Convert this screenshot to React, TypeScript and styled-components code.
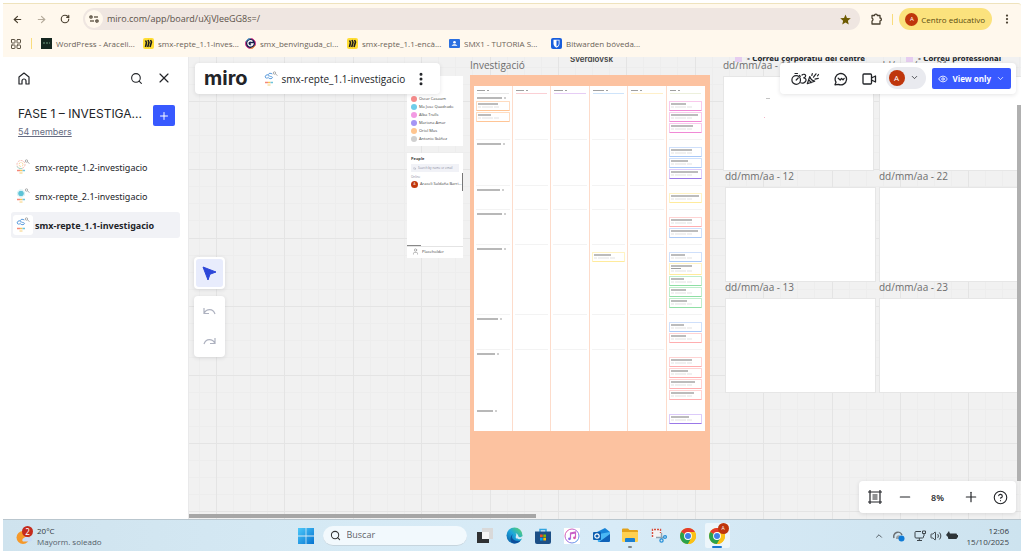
import React from "react";
import styled, { createGlobalStyle } from "styled-components";
import {
  ArrowLeft, ArrowRight, RotateCw, LayoutGrid, EllipsisVertical, Search, X, Plus, Minus,
  ChevronDown, ChevronUp, Eye, CircleHelp, Volume2, User,
} from "lucide-react";

const ui = '"Open Sans", "Noto Sans", sans-serif';
const listFont = '"Noto Sans", "Open Sans", sans-serif';
const brand = 'Inter, "Noto Sans", sans-serif';

const Global = createGlobalStyle`
  *, *::before, *::after { box-sizing: border-box; }
  body { margin: 0; background: #fff; font-family: ${ui}; color: #222428; }
  button { font: inherit; color: inherit; border: 0; padding: 0; background: none; display: flex; align-items: center; justify-content: center; }
  a { color: inherit; text-decoration: none; }
  svg { display: block; flex: none; }
  h1, p, ul { margin: 0; padding: 0; }
  ul { list-style: none; }
`;

const Page = styled.div`
  min-height: 100vh;
  padding: 3px 3px 2px;
  display: flex;
  flex-direction: column;
`;

/* Browser chrome */
const Browser = styled.header`
  background: #fff8ed;
  border-top: 1px solid #efe3bd;
  border-radius: 0 3px 0 0;
`;
const NavRow = styled.div`
  height: 30px;
  display: flex;
  align-items: center;
  padding: 0 2px;
  color: #4a4030;
`;
const NavButton = styled.button<{ $muted?: boolean }>`
  width: 24px;
  height: 22px;
  flex: none;
  color: ${(p) => (p.$muted ? "#b5ab9b" : "#4a4030")};
`;
const Omnibox = styled.div`
  flex: 1;
  height: 22px;
  margin: 0 4px 0 6px;
  padding: 0 9px 0 2px;
  border-radius: 11px;
  background: #efe6e1;
  display: flex;
  align-items: center;
  gap: 4px;
  min-width: 0;
`;
const SiteBadge = styled.button`
  width: 18px;
  height: 18px;
  border-radius: 9px;
  background: #fff8ed;
  flex: none;
`;
const Address = styled.input`
  flex: 1;
  min-width: 0;
  border: 0;
  padding: 0;
  background: none;
  font: 9px/16px ${ui};
  color: #5b5249;
  outline: 0;
`;
const Divider = styled.span`
  width: 1px;
  height: 11px;
  margin: 0 6px 0 4px;
  background: #f9dc7c;
  flex: none;
`;
const Profile = styled.button`
  height: 22px;
  margin-right: 3px;
  padding: 0 7px 0 6px;
  gap: 3px;
  border-radius: 11px;
  background: #fbe27d;
  font-size: 8px;
  color: #5a4a10;
  white-space: nowrap;
`;
const Avatar = styled.span<{ $size: number }>`
  width: ${(p) => p.$size}px;
  height: ${(p) => p.$size}px;
  border-radius: 50%;
  background: #bf360c;
  color: #fff;
  font-size: ${(p) => Math.floor(p.$size / 2)}px;
  line-height: 1;
  display: flex;
  align-items: center;
  justify-content: center;
  flex: none;
`;
const BookmarkRow = styled.nav`
  height: 23px;
  padding: 0 0 4px 7px;
  display: flex;
  align-items: center;
`;
const BookmarkDivider = styled(Divider)`
  margin: 0 9px;
`;
const Bookmark = styled.a`
  width: 102px;
  display: flex;
  align-items: center;
  gap: 4px;
  font: 8px/12px ${ui};
  color: #6b6358;
  white-space: nowrap;
`;

/* Workspace */
const Workspace = styled.main`
  flex: 1;
  display: flex;
  min-height: 0;
`;
const Sidebar = styled.aside`
  width: 185px;
  flex: none;
  padding: 10px 8px 0;
`;
const SideTop = styled.div`
  display: flex;
  align-items: center;
  padding: 0 9px 0 5px;
  gap: 12px;
  height: 22px;
`;
const IconButton = styled.button`
  width: 15px;
  height: 20px;
  flex: none;
`;
const Spacer = styled.span`
  flex: 1;
`;
const SpaceHead = styled.div`
  display: flex;
  justify-content: space-between;
  padding: 15px 5px 0 7px;
`;
const SpaceTitle = styled.h1`
  font: 400 12px/20px ${brand};
  white-space: nowrap;
`;
const Members = styled.a`
  display: block;
  font: 9px/16px ${brand};
  color: #656b81;
  text-decoration: underline;
`;
const AddButton = styled.button`
  width: 22px;
  height: 21px;
  margin-top: 1px;
  border-radius: 2px;
  background: #3859ff;
  color: #fff;
`;
const BoardList = styled.ul`
  display: flex;
  flex-direction: column;
  gap: 3px;
  padding-top: 14px;
`;
const BoardLink = styled.a<{ $active?: boolean }>`
  height: 26px;
  padding-left: 2px;
  border-radius: 3px;
  display: flex;
  align-items: center;
  gap: 2px;
  font-family: ${listFont};
  font-size: 9px;
  font-weight: ${(p) => (p.$active ? 700 : 400)};
  background: ${(p) => (p.$active ? "#f1f2f6" : "transparent")};
  white-space: nowrap;
`;
const Thumb = styled.span`
  width: 20px;
  height: 20px;
  border-radius: 3px;
  background: #fff;
  display: flex;
  align-items: center;
  justify-content: center;
`;

/* Free canvas */
const Canvas = styled.section`
  position: relative;
  flex: 1;
  min-width: 0;
  overflow: hidden;
  background: #f1f1f1;
  border-left: 1px solid #e9e9ea;
`;
const GridLines = styled.svg`
  position: absolute;
  inset: 0;
  width: 100%;
  height: 100%;
`;
const Placed = styled.div<{ $x: number; $y: number }>`
  position: absolute;
  left: ${(p) => p.$x}px;
  top: ${(p) => p.$y}px;
`;
const FrameTitle = styled.div`
  font: 10px/16px ${ui};
  color: #6d6d6d;
  white-space: nowrap;
`;
const Sheet = styled.div`
  width: 151px;
  height: 95px;
  background: #fff;
  border: 1px solid #e6e6e6;
`;
const Heading = styled.div`
  display: flex;
  gap: 5px;
  font: 700 7px/8px "DejaVu Sans", sans-serif;
  white-space: nowrap;
`;
const Tag = styled.span`
  width: 7px;
  height: 7px;
  background: #e6cdf0;
`;
const PlaceName = styled.div`
  font: 600 8px/10px ${brand};
  color: #444;
`;

/* Research frame with the kanban */
const Frame = styled.div`
  width: 240px;
  padding: 11px 5px 59px 4px;
  background: #fcc2a0;
`;
const Kanban = styled.div`
  background: #fff;
`;
const Lane = styled.div`
  display: grid;
  grid-template-columns: repeat(6, 1fr);
`;
const HeadCell = styled.div<{ $line: string }>`
  height: 8px;
  padding: 4px 3px 0;
  border-right: 1px solid #fddccb;
  display: flex;
  flex-wrap: wrap;
  gap: 2px;
  &::after { content: ""; width: 100%; height: 1px; background: ${(p) => p.$line}; }
  &:last-child { border-right-color: #fff; }
`;
const Cell = styled.div`
  border-right: 1px solid #fddccb;
  padding: 0 2px;
  &:last-child { border-right-color: #fff; }
`;
const CellBody = styled.div<{ $last?: boolean }>`
  height: 100%;
  padding-bottom: 6px;
  border-bottom: 1px solid ${(p) => (p.$last ? "#fff" : "#f3f3f3")};
  display: flex;
  flex-direction: column;
  gap: 1px;
`;
const LaneLabel = styled.div`
  height: 6px;
  padding: 3px 0 0 1px;
  display: flex;
  gap: 2px;
`;
const Bar = styled.span<{ $w: number; $tone?: string; $h?: number }>`
  width: ${(p) => p.$w}px;
  height: ${(p) => p.$h ?? 1}px;
  background: ${(p) => p.$tone ?? "#a0a0a0"};
`;
const Card = styled.div<{ $tone: string; $edge: string; $tall?: boolean }>`
  height: ${(p) => (p.$tall ? 12 : 10)}px;
  padding: 1px;
  border: 1px solid ${(p) => p.$tone};
  border-bottom-color: ${(p) => p.$edge};
  border-radius: 1px;
  display: flex;
  flex-direction: column;
  gap: 1px;
`;
const Chips = styled.div`
  display: flex;
  gap: 1px;
`;

/* People lists */
const PeopleCard = styled.div<{ $h: number; $end?: boolean }>`
  width: 56px;
  height: ${(p) => p.$h}px;
  background: #fff;
  padding: 3px 4px;
  font-size: 4px;
  line-height: 6px;
  color: #444;
  display: flex;
  flex-direction: column;
  justify-content: ${(p) => (p.$end ? "flex-end" : "flex-start")};
`;
const Person = styled.div`
  height: 8px;
  display: flex;
  align-items: center;
  gap: 2px;
  white-space: nowrap;
`;
const Dot = styled.span<{ $c: string }>`
  width: 6px;
  height: 6px;
  border-radius: 50%;
  background: ${(p) => p.$c};
`;
const MiniSearch = styled.label`
  height: 8px;
  margin: 2px 0;
  padding-left: 2px;
  background: #f1f2f7;
  display: flex;
  align-items: center;
  gap: 2px;
  color: #8a8ea0;
  input { width: 42px; border: 0; padding: 0; background: none; font: 3px/6px ${ui}; outline: 0; }
  input::placeholder { color: #8a8ea0; }
`;
const MiniLabel = styled.span`
  font-size: 3px;
  color: #8a8ea0;
`;
const MiniScroll = styled.span`
  position: absolute;
  right: 0;
  top: 20px;
  width: 1px;
  height: 18px;
  background: #777;
`;
const MiniFoot = styled.div`
  margin: 0 -4px;
  padding: 1px 0 0 5px;
  border-top: 1px solid #e4e4e4;
  display: flex;
  align-items: center;
  gap: 3px;
`;
const MiniTrack = styled(Bar)`
  margin: auto 0 0 -4px;
`;

/* Floating toolbars */
const Panel = styled.div`
  position: absolute;
  background: #fff;
  border-radius: 4px;
  box-shadow: 0 1px 4px rgba(34, 36, 40, 0.12);
  display: flex;
  align-items: center;
`;
const TitlePanel = styled(Panel)`
  left: 6px;
  top: 6px;
  height: 31px;
  padding: 0 12px 0 9px;
`;
const Logo = styled.a`
  font: 700 20px/24px ${brand};
  margin-right: 16px;
  padding-bottom: 2px;
`;
const BoardName = styled.span`
  font-size: 10px;
  line-height: 16px;
  margin: 0 8px 0 4px;
  white-space: nowrap;
`;
const ActionPanel = styled(Panel)`
  right: 5px;
  top: 6px;
  height: 31px;
  padding: 0 5px 0 11px;
`;
const Actions = styled.div`
  display: flex;
  align-items: center;
  gap: 14px;
`;
const Account = styled.button`
  height: 22px;
  margin: 0 6px 2px 9px;
  padding: 0 7px 0 3px;
  gap: 5px;
  border-radius: 11px;
  background: #e9eaef;
`;
const ViewOnly = styled.button`
  height: 21px;
  padding: 0 6px;
  gap: 5px;
  border-radius: 2px;
  background: #3859ff;
  color: #fff;
  font-size: 8px;
  font-weight: 700;
  white-space: nowrap;
`;
const SelectPanel = styled(Panel)`
  left: 5px;
  top: 200px;
  width: 31px;
  height: 32px;
  padding: 2px;
`;
const SelectTool = styled.button`
  width: 27px;
  height: 28px;
  border-radius: 3px;
  background: #e8ecfc;
`;
const HistoryPanel = styled(Panel)`
  left: 5px;
  top: 239px;
  width: 31px;
  height: 61px;
  flex-direction: column;
  justify-content: space-around;
`;
const ZoomPanel = styled(Panel)`
  right: 5px;
  bottom: 6px;
  height: 32px;
  padding: 0 8px;
  gap: 15px;
  font-size: 9px;
  font-weight: 600;
`;
const ZoomLevel = styled.span`
  width: 21px;
  text-align: center;
`;
const ScrollX = styled.div`
  position: absolute;
  left: 0;
  bottom: 1px;
  width: 347px;
  height: 4px;
  background: #a6a6a6;
`;
const ScrollY = styled.div`
  position: absolute;
  right: 0;
  top: 48px;
  bottom: 38px;
  width: 4px;
  background: #b0b0b0;
`;

/* Windows taskbar */
const Taskbar = styled.footer`
  height: 32px;
  border-top: 1px solid #b9c6ce;
  background: linear-gradient(90deg, #cfe3ee, #d6eaf5 35%, #d8ebf7 60%, #cde3ef);
  display: grid;
  grid-template-columns: 1fr auto 1fr;
  align-items: center;
  font-size: 8px;
  line-height: 11px;
  color: #55616a;
`;
const Weather = styled.button`
  justify-self: start;
  margin-left: 13px;
  gap: 4px;
  text-align: left;
`;
const Stack = styled.span`
  display: flex;
  flex-direction: column;
`;
const Strong = styled.span`
  color: #33393d;
`;
const Apps = styled.div`
  display: flex;
  align-items: center;
  padding-left: 5px;
`;
const SearchBox = styled.label`
  width: 144px;
  height: 20px;
  margin: 0 4px 0 9px;
  padding-left: 7px;
  border-radius: 10px;
  background: #f2f9fd;
  border-bottom: 1px solid #c6d5de;
  display: flex;
  align-items: center;
  gap: 6px;
  color: #333;
  input { width: 100px; border: 0; padding: 0; background: none; font: 9px/14px ${ui}; outline: 0; }
  input::placeholder { color: #5f6468; opacity: 1; }
`;
const AppButton = styled.button<{ $active?: boolean; $open?: boolean }>`
  position: relative;
  width: 25px;
  height: 25px;
  margin: 0 2px;
  border-radius: 2px;
  background: ${(p) => (p.$active ? "#edf6fb" : "none")};
  &::after {
    content: "";
    position: absolute;
    bottom: 0;
    width: ${(p) => (p.$active ? 10 : p.$open ? 4 : 0)}px;
    height: 2px;
    border-radius: 1px;
    background: ${(p) => (p.$active ? "#1976d2" : "#7b868d")};
  }
`;
const Notice = styled.span`
  position: absolute;
  right: 1px;
  top: 0;
`;
const Tray = styled.div`
  justify-self: end;
  display: flex;
  align-items: center;
  gap: 9px;
  padding-right: 12px;
  color: #3d454b;
`;
const TrayGroup = styled.div`
  display: flex;
  align-items: center;
  gap: 4px;
`;
const Clock = styled(Stack)`
  text-align: right;
`;

const Thumbnail = ({ kind }: { kind: "spiral" | "gear" | "loop" }) => (
  <svg width="14" height="16" viewBox="0 0 14 16" fill="none">
    {kind === "spiral" && (
      <>
        <circle cx="5" cy="5.500" r="4" stroke="#f5b8b0" strokeDasharray="2 1" />
        <circle cx="5" cy="5.500" r="2" stroke="#f9d79a" strokeDasharray="2 1" />
        <path d="M1 7.500a4 4 0 0 0 5 2" stroke="#9bdccf" />
      </>
    )}
    {kind === "gear" && (
      <>
        <circle cx="5" cy="5.500" r="2.800" fill="#5cc3d6" />
        <circle cx="5" cy="5.500" r="3.600" stroke="#a8e0e9" strokeDasharray="1 1" />
      </>
    )}
    {kind === "loop" && (
      <path d="M8 2.800C6 1.500 3.800 2.600 4.500 4.200 5.200 5.800 7.800 5.200 8.400 6.200 8.800 7.500 6.500 8.200 5 7.400M4 3.800C2.500 3.500 1 4.500 1.200 6 1.500 7.500 3.500 7.500 4.500 6.300" stroke="#5a9bdc" strokeLinecap="round" />
    )}
    <path d="M1 11.500h3" stroke="#f58878" strokeWidth="1.500" />
    <path d="M4 11.500h2.500" stroke="#f8c458" strokeWidth="1.500" />
    <path d="M6.500 11.500H9" stroke="#6cc4de" strokeWidth="1.500" />
    <path d="M3.500 14h3" stroke="#f6cf7a" />
    <circle cx="10.500" cy="2" r="1.200" stroke="#999" strokeWidth=".8" />
    <path d="m11.500 3 2 1.500" stroke="#999" strokeWidth=".8" />
  </svg>
);

const HomeIcon = () => (
  <svg width="12" height="13" viewBox="0 0 12 13" fill="none" stroke="#222428" strokeWidth="1.200">
    <path d="M1 12V5L6 1l5 4v7H8V9a2 2 0 0 0-4 0v3Z" strokeLinejoin="round" />
  </svg>
);

const TuneIcon = () => (
  <svg width="10" height="8" viewBox="0 0 10 8" fill="none" stroke="#4a4030" strokeWidth="1.200">
    <circle cx="2" cy="2" r="1.200" /><path d="M5 2h4" />
    <circle cx="8" cy="6" r="1.200" /><path d="M1 6h4" />
  </svg>
);

const StarIcon = () => (
  <svg width="11" height="11" viewBox="0 0 24 24" fill="#6d5a00">
    <path d="m12 1 3.200 7.600 8.300.7-6.300 5.400 1.900 8.100L12 18.500l-7.100 4.300 1.900-8.100L.5 9.300l8.300-.7z" />
  </svg>
);

const ExtensionIcon = () => (
  <svg width="13" height="12" viewBox="0 0 13 12" fill="none" stroke="#4a4030" strokeWidth="1.300" strokeLinejoin="round">
    <path d="M2 2.500h2.500a1.400 1.400 0 0 1 2.800 0H10V5a1.400 1.400 0 0 1 0 2.800V11H2V8a1.500 1.500 0 0 0 0-2.800Z" />
  </svg>
);

const MiroFav = () => (
  <svg width="11" height="11" viewBox="0 0 11 11">
    <rect width="11" height="11" rx="2" fill="#ffdd33" />
    <path d="m2.500 2.500 1 2-1 4.500M5 2l1 2.500L4.700 9M7.500 2l1 2L7 9" stroke="#1c1c1e" strokeWidth="1.600" fill="none" />
  </svg>
);
const WordFav = () => (
  <svg width="11" height="11" viewBox="0 0 11 11">
    <rect width="11" height="11" fill="#14261f" />
    <path d="M2 5h7" stroke="#6f9c80" strokeDasharray="2 1" />
  </svg>
);
const GFav = () => (
  <svg width="11" height="11" viewBox="0 0 11 11" fill="none">
    <circle cx="5.500" cy="5.500" r="5" fill="#17224d" stroke="#e0358a" />
    <path d="M1 3.500A5 5 0 0 1 5.500.5" stroke="#31c1e0" />
    <path d="M10 7.500a5 5 0 0 1-4.500 3" stroke="#f2b430" />
    <path d="M7.500 3.700A2.600 2.600 0 1 0 8 6H5.700" stroke="#fff" strokeWidth="1.300" />
  </svg>
);
const ClassFav = () => (
  <svg width="11" height="9" viewBox="0 0 11 9">
    <rect width="11" height="9" rx="1" fill="#2a6fe0" />
    <circle cx="5.500" cy="3.200" r="1.300" fill="#fff" />
    <path d="M2.700 6.800c.5-2 5-2 5.600 0Z" fill="#fff" />
  </svg>
);
const ShieldFav = () => (
  <svg width="11" height="11" viewBox="0 0 11 11">
    <rect width="11" height="11" rx="2" fill="#175ddc" />
    <path d="M2.500 1.700h6v4c0 2-1.500 3-3 4-1.500-1-3-2-3-4Z" fill="#fff" />
    <path d="M5.500 2.600h2.200v3.100c0 1.300-1 2.100-2.200 2.900Z" fill="#175ddc" />
  </svg>
);

const ReactionsIcon = () => (
  <svg width="29" height="14" viewBox="0 0 29 14" fill="none" stroke="#222428" strokeWidth="1.200" strokeLinecap="round" strokeLinejoin="round">
    <circle cx="5.200" cy="8" r="4.300" /><path d="M4 1.500h2.500M5.200 8l2-2M8.500 3.500l.8.800" />
    <path d="M11 3c1.300-1.300 3.800-.8 3.700.8-.1 1.200-1 1.800-2 2 1.700.2 2.800 1.500 2.200 3-.7 2-3.200 2.900-5.200 2" />
    <path d="m18.800 4.500-2.500 7.200 7.400-2.500M18.800 4.500c.8 2.500 2.400 4.300 4.900 4.700M17.800 7.800l2.400 2.700" />
    <path d="m20.800 3.500.5-1.800M22.500 5.200l2.500-3.400M24 7.200l3.300-.8M26.500 3.800l1-1.300" />
  </svg>
);
const CommentIcon = () => (
  <svg width="14" height="14" viewBox="0 0 14 14" fill="none" stroke="#222428" strokeWidth="1.300" strokeLinejoin="round" strokeLinecap="round">
    <path d="M2 10.200A5.700 5.700 0 1 1 4.500 12.400L1 12.800Z" />
    <path d="m4.200 6.200 2 1.800 1.300-1.500L9 7.800l1.200-1.400" />
  </svg>
);
const CameraIcon = () => (
  <svg width="15" height="12" viewBox="0 0 15 12" fill="none" stroke="#222428" strokeWidth="1.300" strokeLinejoin="round">
    <rect x="1" y="1" width="8.500" height="10" rx="1" /><path d="M9.500 4.500h1l3-1.500v6l-3-1.500h-1" />
  </svg>
);
const CursorIcon = () => (
  <svg width="15" height="15" viewBox="0 0 15 15"><path d="m1 1 13 5-6 2.200L6 14Z" fill="#2d47d8" stroke="#2d47d8" strokeLinejoin="round" /></svg>
);
const UndoIcon = ({ flip }: { flip?: boolean }) => (
  <svg width="13" height="9" viewBox="0 0 13 9" fill="none" stroke="#aeb2c0" strokeWidth="1.200">
    {flip ? <path d="M12 1v5.500H7M12 6.300C9.500 1.500 3 1 1 7" /> : <path d="M1 1v5.500h5M1 6.300C3.500 1.500 10 1 12 7" />}
  </svg>
);
const FramesIcon = () => (
  <svg width="14" height="14" viewBox="0 0 14 14" fill="none" stroke="#222428" strokeWidth="1.200">
    <path d="M2 0v14M12 0v14M0 2h14M0 12h14M4.500 5h5M4.500 7h5M4.500 9h5" />
  </svg>
);

const WeatherIcon = () => (
  <svg width="17" height="19" viewBox="0 0 17 19">
    <circle cx="7" cy="11.500" r="6.500" fill="#f5992a" />
    <path d="M7 15.500a2 2 0 0 1 1-3.500 3 3 0 0 1 5-.5 2 2 0 0 1 1.500 4Z" fill="#c9dcf8" />
    <circle cx="11.500" cy="5.500" r="5.500" fill="#c42b1c" />
    <text x="11.500" y="8.500" fontSize="8" fill="#fff" textAnchor="middle" fontFamily="Noto Sans">2</text>
  </svg>
);
const WindowsIcon = () => (
  <svg width="16" height="16" viewBox="0 0 16 16">
    <defs><linearGradient id="win" x1="0" y1="0" x2="1" y2="1"><stop stopColor="#4cc8fa" /><stop offset="1" stopColor="#0673d0" /></linearGradient></defs>
    <path d="M0 0h7.600v7.600H0zM8.400 0H16v7.600H8.400zM0 8.400h7.600V16H0zM8.400 8.400H16V16H8.400z" fill="url(#win)" />
  </svg>
);
const DesksIcon = () => (
  <svg width="16" height="16" viewBox="0 0 16 16">
    <path d="M0 4h12v11H0z" fill="#2f3133" /><path d="M5 0h11v11H5z" fill="#d9d9d9" /><path d="M5 4h7v7H5z" fill="#f4f4f4" />
  </svg>
);
const EdgeIcon = () => (
  <svg width="17" height="17" viewBox="0 0 17 17">
    <defs><linearGradient id="edge" x1="0" y1="1" x2="1" y2="0"><stop stopColor="#0c59a4" /><stop offset=".5" stopColor="#1ba6dd" /><stop offset="1" stopColor="#66d95a" /></linearGradient></defs>
    <circle cx="8.500" cy="8.500" r="8" fill="url(#edge)" />
    <path d="M7 7c-3 4 1 8 7.500 6.500-1.500 2.300-4 3-6 3C4 16.500 3 10 7 7Z" fill="#0c4f9c" />
    <path d="M9.500 6.500c2 1-.5 3 .5 4.500s4.500 1.500 6 .5l1-1V9c-1 1.500-4 1.500-4.500.5s-.5-3-3-3Z" fill="#d6eaf5" />
  </svg>
);
const StoreIcon = () => (
  <svg width="16" height="16" viewBox="0 0 16 16">
    <path d="M5 4V1.500h6V4" stroke="#2fa4e0" strokeWidth="1.500" fill="none" />
    <path d="M0 3.500h16V14a2 2 0 0 1-2 2H2a2 2 0 0 1-2-2Z" fill="#1c4f86" />
    <path d="M5 6.500h2.700v2.700H5z" fill="#f25022" /><path d="M8.300 6.500H11v2.700H8.300z" fill="#7fba00" />
    <path d="M5 9.800h2.700v2.700H5z" fill="#00a4ef" /><path d="M8.300 9.800H11v2.700H8.300z" fill="#ffb900" />
  </svg>
);
const MusicIcon = () => (
  <svg width="16" height="16" viewBox="0 0 16 16" fill="none">
    <defs><linearGradient id="music" x1="0" y1="0" x2="1" y2="1"><stop stopColor="#f2549b" /><stop offset=".5" stopColor="#a66be0" /><stop offset="1" stopColor="#39a9ef" /></linearGradient></defs>
    <path d="M0 0h16v16H0z" fill="#fff" />
    <circle cx="8" cy="8" r="7" stroke="url(#music)" />
    <path d="M6.500 10.500V5l5-1v5.500M6.500 6l5-1" stroke="#c95fc8" strokeWidth="1.200" />
    <circle cx="5.500" cy="10.800" r="1.400" fill="#8a6be8" /><circle cx="10.500" cy="9.800" r="1.400" fill="#d757b0" />
  </svg>
);
const OutlookIcon = () => (
  <svg width="17" height="15" viewBox="0 0 17 15">
    <path d="m4 4 8-4 5 4v8a2 2 0 0 1-2 2H5Z" fill="#1683d8" /><path d="m6 6 11-2v8a2 2 0 0 1-2 2H5Z" fill="#4ab8f5" /><path d="m6 14 11-8v7l-1 1Z" fill="#0f62b8" />
    <rect y="4" width="8" height="8" rx="1" fill="#0d5fb0" /><circle cx="4" cy="8" r="2.200" stroke="#fff" strokeWidth="1.200" fill="none" />
  </svg>
);
const FolderIcon = () => (
  <svg width="16" height="15" viewBox="0 0 16 15">
    <path d="M0 1.500A1 1 0 0 1 1 .5h5L7.500 2H15a1 1 0 0 1 1 1v3H0Z" fill="#e3a21a" />
    <path d="M0 4h16v9a1 1 0 0 1-1 1H1a1 1 0 0 1-1-1Z" fill="#ffd04f" />
    <path d="M3 11a1 1 0 0 1 1-1h8a1 1 0 0 1 1 1v3H3Z" fill="#1b7fd0" />
  </svg>
);
const SnipIcon = () => (
  <svg width="16" height="15" viewBox="0 0 16 15" fill="none">
    <path d="M1 1h9v9H1z" fill="#f3f3f3" />
    <path d="M1.500 9V1.500H9.500V5" stroke="#d65040" strokeWidth="1.400" strokeDasharray="2 1" />
    <path d="M10.500 5v6M5 9.500h8" stroke="#8fa3b0" strokeWidth="1.400" />
    <circle cx="10.500" cy="12.500" r="1.600" stroke="#2891d8" strokeWidth="1.300" /><circle cx="14" cy="9" r="1.400" stroke="#2891d8" strokeWidth="1.300" />
  </svg>
);
const ChromeIcon = () => (
  <svg width="16" height="16" viewBox="0 0 16 16">
    <circle cx="8" cy="8" r="8" fill="#fbc116" />
    <path d="M8 8 1.100 4A8 8 0 0 1 15 4Z" fill="#e33b2e" /><path d="M1.100 4A8 8 0 0 0 8 16l3.500-6L8 8Z" fill="#2ba24c" /><path d="M8 4h7a8 8 0 0 1-7 12l3.500-6Z" fill="#fbc116" />
    <circle cx="8" cy="8" r="3.900" fill="#fff" /><circle cx="8" cy="8" r="3" fill="#3f7fe8" />
  </svg>
);
const CloudIcon = () => (
  <svg width="12" height="12" viewBox="0 0 12 12">
    <path d="M1 8a4 4 0 1 1 8-3" fill="none" stroke="#6a6f73" strokeWidth="1.500" /><path d="M3 8c0-3 4-4 5-1l-2 2H3Z" fill="#9aa0a4" />
    <circle cx="8.500" cy="8.500" r="3" fill="#0f7bd6" />
  </svg>
);
const NetworkIcon = () => (
  <svg width="12" height="11" viewBox="0 0 12 11" fill="none" stroke="#3d454b">
    <path d="M7 1.500H2a1 1 0 0 0-1 1V7a1 1 0 0 0 1 1h6.500a1 1 0 0 0 1-1V6M3 10.500h5M5.300 8v2.500M8.500 1h3v2.500h-3zM10 3.500V6" />
  </svg>
);
const BatteryIcon = () => (
  <svg width="12" height="9" viewBox="0 0 12 9">
    <rect x="2" y="2.500" width="9" height="5.500" rx="1" fill="#2d3438" /><path d="M11 4h1v2.500h-1zM0 4 3 0l1 3h2L3 7" fill="#2d3438" />
  </svg>
);

const bookmarks = [
  { icon: <WordFav />, label: "WordPress - Araceli..." },
  { icon: <MiroFav />, label: "smx-repte_1.1-inves..." },
  { icon: <GFav />, label: "smx_benvinguda_ci..." },
  { icon: <MiroFav />, label: "smx-repte_1.1-encà..." },
  { icon: <ClassFav />, label: "SMX1 - TUTORIA S..." },
  { icon: <ShieldFav />, label: "Bitwarden bóveda..." },
];

const boards = [
  { kind: "spiral" as const, label: "smx-repte_1.2-investigacio" },
  { kind: "gear" as const, label: "smx-repte_2.1-investigacio" },
  { kind: "loop" as const, label: "smx-repte_1.1-investigacio", active: true },
];

const tones = {
  orange: ["#ffdcc0", "#ffc596"],
  pink: ["#f9c9ec", "#f08ad6"],
  blue: ["#cfe0fb", "#a9c9f8"],
  violet: ["#dccbfa", "#9a78e8"],
  yellow: ["#fff3c4", "#ffeb9c"],
  red: ["#ffd3d3", "#ffaeb0"],
  green: ["#bfeecb", "#8fdfa5"],
};
type Tone = keyof typeof tones;
type Note = { tone: Tone; w: number; tall?: boolean };
type LaneData = { label: number; cells: Partial<Record<number, Note[]>> };

const lanes: LaneData[] = [
  { label: 25, cells: { 0: [{ tone: "orange", w: 20 }, { tone: "orange", w: 13 }], 5: [{ tone: "pink", w: 15 }, { tone: "pink", w: 27 }, { tone: "pink", w: 22 }] } },
  { label: 24, cells: { 5: [{ tone: "blue", w: 21 }, { tone: "blue", w: 17 }, { tone: "violet", w: 27 }] } },
  { label: 23, cells: { 5: [{ tone: "yellow", w: 28 }] } },
  { label: 25, cells: { 5: [{ tone: "red", w: 21 }, { tone: "blue", w: 27 }] } },
  { label: 25, cells: { 3: [{ tone: "yellow", w: 17 }], 5: [{ tone: "blue", w: 14 }, { tone: "yellow", w: 21, tall: true }, { tone: "green", w: 13 }, { tone: "green", w: 15 }, { tone: "green", w: 16 }] } },
  { label: 21, cells: { 5: [{ tone: "blue", w: 13 }, { tone: "red", w: 15 }] } },
  { label: 18, cells: { 5: [{ tone: "red", w: 21 }, { tone: "red", w: 17 }, { tone: "red", w: 24 }, { tone: "red", w: 23 }] } },
  { label: 16, cells: { 5: [{ tone: "violet", w: 18 }] } },
];
const headLines = [["#e9e9e9", 8], ["#fbd0d5", 8], ["#e6cdf5", 9], ["#cfe4fa", 11], ["#fff0c9", 7], ["#edf0dc", 6]] as [string, number][];

const people: [string, string][] = [
  ["#f58b8b", "Oscar Casaum"],
  ["#6fcdea", "Ma Jose Quadrado"],
  ["#f39ae3", "Alba Trulls"],
  ["#a595f5", "Mariona Amar"],
  ["#ffc58f", "Oriol Mus"],
  ["#d0d0d0", "Antonio Ibáñez"],
];

const sheets = [
  { x: 534, y: 19, title: "dd/mm/aa - 11" },
  { x: 690, y: 19, title: "dd/mm/aa - 21" },
  { x: 536, y: 130, title: "dd/mm/aa - 12" },
  { x: 690, y: 130, title: "dd/mm/aa - 22" },
  { x: 536, y: 241, title: "dd/mm/aa - 13" },
  { x: 690, y: 241, title: "dd/mm/aa - 23" },
];

const majors = [0, 68, 137, 205, 274];
const minors = majors.flatMap((m) => [m + 17, m + 34, m + 51]);

const BoardGrid = () => (
  <GridLines aria-hidden="true">
    <defs>
      <pattern id="grid" x="27" y="44" width="342" height="342" patternUnits="userSpaceOnUse">
        {minors.map((n) => <path key={n} d={`M${n} 0h1v342h-1zM0 ${n}h342v1H0z`} fill="#ededed" />)}
        {majors.map((n) => <path key={n} d={`M${n} 0h1v342h-1zM0 ${n}h342v1H0z`} fill="#e4e4e4" />)}
      </pattern>
    </defs>
    <rect width="100%" height="100%" fill="url(#grid)" />
  </GridLines>
);

const NoteCard = ({ note }: { note: Note }) => (
  <Card $tone={tones[note.tone][0]} $edge={tones[note.tone][1]} $tall={note.tall}>
    <Bar $w={note.w} $h={2} $tone="#bcbcbc" />
    {note.tall && <Bar $w={10} />}
    <Chips>
      <Bar $w={3} $h={2} $tone="#f0f0f0" />
      <Bar $w={11} $h={2} $tone="#f0f0f0" />
      <Bar $w={5} $h={2} $tone="#f0f0f0" />
    </Chips>
  </Card>
);

const KanbanBoard = () => (
  <Kanban>
    <Lane>
      {headLines.map(([line, w], i) => (
        <HeadCell key={i} $line={line}><Bar $w={w} /><Bar $w={2} /></HeadCell>
      ))}
    </Lane>
    {lanes.map((lane, r) => (
      <Lane key={r}>
        {[0, 1, 2, 3, 4, 5].map((c) => (
          <Cell key={c}>
            <CellBody $last={r >= lanes.length - 2}>
              <LaneLabel>
                {c === 0 && <><Bar $w={lane.label} $h={2} $tone="#b8b8b8" /><Bar $w={2} $h={2} $tone="#cfcfcf" /></>}
              </LaneLabel>
              {lane.cells[c]?.map((note, n) => <NoteCard key={n} note={note} />)}
            </CellBody>
          </Cell>
        ))}
      </Lane>
    ))}
  </Kanban>
);

export default function App() {
  return (
    <>
      <Global />
      <Page>
        <Browser>
          <NavRow>
            <NavButton aria-label="Atrás"><ArrowLeft size={11} strokeWidth={2.5} /></NavButton>
            <NavButton aria-label="Adelante" $muted><ArrowRight size={11} strokeWidth={2.5} /></NavButton>
            <NavButton aria-label="Recargar"><RotateCw size={10} strokeWidth={2.75} /></NavButton>
            <Omnibox>
              <SiteBadge aria-label="Información del sitio"><TuneIcon /></SiteBadge>
              <Address aria-label="Dirección" defaultValue="miro.com/app/board/uXjVJeeGG8s=/" />
              <button aria-label="Marcador"><StarIcon /></button>
            </Omnibox>
            <NavButton aria-label="Extensiones"><ExtensionIcon /></NavButton>
            <Divider />
            <Profile><Avatar $size={13}>A</Avatar>Centro educativo</Profile>
            <NavButton aria-label="Menú"><EllipsisVertical size={12} strokeWidth={2.5} /></NavButton>
          </NavRow>
          <BookmarkRow>
            <LayoutGrid size={12} color="#5c5344" />
            <BookmarkDivider />
            {bookmarks.map((b, i) => <Bookmark key={i} href="#">{b.icon}{b.label}</Bookmark>)}
          </BookmarkRow>
        </Browser>

        <Workspace>
          <Sidebar>
            <SideTop>
              <IconButton aria-label="Inicio"><HomeIcon /></IconButton>
              <Spacer />
              <IconButton aria-label="Buscar"><Search size={13} /></IconButton>
              <IconButton aria-label="Cerrar"><X size={16} strokeWidth={1.75} /></IconButton>
            </SideTop>
            <SpaceHead>
              <div>
                <SpaceTitle>FASE 1 – INVESTIGA...</SpaceTitle>
                <Members href="#">54 members</Members>
              </div>
              <AddButton aria-label="Añadir"><Plus size={12} /></AddButton>
            </SpaceHead>
            <BoardList>
              {boards.map((b) => (
                <li key={b.label}>
                  <BoardLink href="#" $active={b.active}><Thumb><Thumbnail kind={b.kind} /></Thumb>{b.label}</BoardLink>
                </li>
              ))}
            </BoardList>
          </Sidebar>

          <Canvas>
            <BoardGrid />

            <Placed $x={218} $y={19}>
              <PeopleCard $h={70} $end>
                {people.map(([c, name]) => <Person key={name}><Dot $c={c} />{name}</Person>)}
              </PeopleCard>
            </Placed>
            <Placed $x={218} $y={96}>
              <PeopleCard $h={105}>
                <strong>People</strong>
                <MiniSearch><Search size={3} /><input aria-label="People" placeholder="Search by name or email" /></MiniSearch>
                <MiniLabel>Online</MiniLabel>
                <Person><Avatar $size={7}>A</Avatar>Araceli Saldaña Barri...</Person>
                <MiniScroll />
                <MiniTrack $w={14} $tone="#888" />
                <MiniFoot><User size={7} color="#888" />Placeholder</MiniFoot>
              </PeopleCard>
            </Placed>

            <Placed $x={381} $y={-3}><PlaceName>Sverdlovsk</PlaceName></Placed>
            <Placed $x={281} $y={0}><FrameTitle>Investigació</FrameTitle></Placed>
            <Placed $x={281} $y={18}><Frame><KanbanBoard /></Frame></Placed>

            {sheets.map((s) => <Placed key={s.title} $x={s.x} $y={s.y}><Sheet /></Placed>)}
            {sheets.map((s) => (
              <Placed key={s.title} $x={s.x} $y={s.y - 19}><FrameTitle>{s.title}</FrameTitle></Placed>
            ))}
            <Placed $x={577} $y={41}><Chips><Bar $w={4} $tone="#c4c4c4" /></Chips></Placed>
            <Placed $x={575} $y={60}><Chips><Bar $w={1} $tone="#f3b6c8" /></Chips></Placed>
            <Placed $x={546} $y={-2}><Heading><Tag />- Correu corporatiu del centre</Heading></Placed>
            <Placed $x={717} $y={-2}><Heading><Tag />- Correu professional</Heading></Placed>

            <ScrollX />
            <ScrollY />

            <TitlePanel>
              <Logo href="#">miro</Logo>
              <Thumbnail kind="loop" />
              <BoardName>{boards[2].label}</BoardName>
              <IconButton aria-label="Más"><EllipsisVertical size={16} strokeWidth={2.5} /></IconButton>
            </TitlePanel>

            <ActionPanel>
              <Actions>
                <button aria-label="Reacciones"><ReactionsIcon /></button>
                <button aria-label="Comentarios"><CommentIcon /></button>
                <button aria-label="Vídeo"><CameraIcon /></button>
              </Actions>
              <Account aria-label="Cuenta"><Avatar $size={16}>A</Avatar><ChevronDown size={9} /></Account>
              <ViewOnly><Eye size={10} />View only<ChevronDown size={9} /></ViewOnly>
            </ActionPanel>

            <SelectPanel><SelectTool aria-label="Seleccionar"><CursorIcon /></SelectTool></SelectPanel>
            <HistoryPanel>
              <button aria-label="Deshacer"><UndoIcon /></button>
              <button aria-label="Rehacer"><UndoIcon flip /></button>
            </HistoryPanel>

            <ZoomPanel>
              <IconButton aria-label="Marcos"><FramesIcon /></IconButton>
              <IconButton aria-label="Alejar"><Minus size={16} strokeWidth={1.75} /></IconButton>
              <ZoomLevel>8%</ZoomLevel>
              <IconButton aria-label="Acercar"><Plus size={16} strokeWidth={1.75} /></IconButton>
              <IconButton aria-label="Ayuda"><CircleHelp size={15} strokeWidth={1.75} /></IconButton>
            </ZoomPanel>
          </Canvas>
        </Workspace>

        <Taskbar>
          <Weather><WeatherIcon /><Stack><Strong>20°C</Strong><span>Mayorm. soleado</span></Stack></Weather>
          <Apps>
            <button aria-label="Inicio de Windows"><WindowsIcon /></button>
            <SearchBox><Search size={11} strokeWidth={2.25} /><input aria-label="Buscar" placeholder="Buscar" /></SearchBox>
            <AppButton aria-label="Escritorios"><DesksIcon /></AppButton>
            <AppButton aria-label="Edge"><EdgeIcon /></AppButton>
            <AppButton aria-label="Store"><StoreIcon /></AppButton>
            <AppButton aria-label="Música"><MusicIcon /></AppButton>
            <AppButton aria-label="Outlook"><OutlookIcon /></AppButton>
            <AppButton aria-label="Archivos" $open><FolderIcon /></AppButton>
            <AppButton aria-label="Recortes"><SnipIcon /></AppButton>
            <AppButton aria-label="Chrome"><ChromeIcon /></AppButton>
            <AppButton aria-label="Chrome, Centro educativo" $active><ChromeIcon /><Notice><Avatar $size={11}>A</Avatar></Notice></AppButton>
          </Apps>
          <Tray>
            <ChevronUp size={10} />
            <CloudIcon />
            <TrayGroup>
              <NetworkIcon />
              <Volume2 size={12} />
              <BatteryIcon />
            </TrayGroup>
            <Clock><Strong>12:06</Strong><span>15/10/2025</span></Clock>
          </Tray>
        </Taskbar>
      </Page>
    </>
  );
}
